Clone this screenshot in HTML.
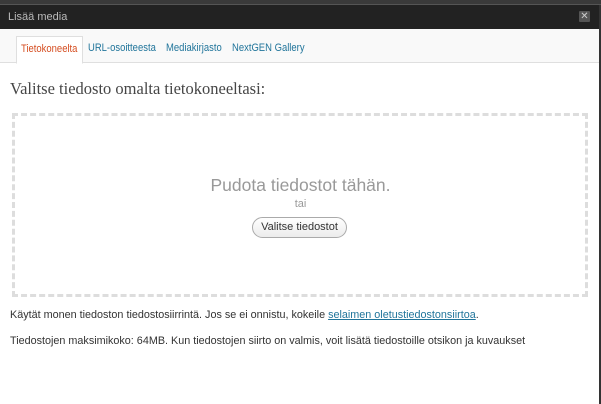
<!DOCTYPE html>
<html><head><meta charset="utf-8"><style>
*{margin:0;padding:0;box-sizing:border-box}
body{width:601px;height:404px;overflow:hidden;background:#fff;font-family:"Liberation Sans",sans-serif;position:relative}
.top{position:absolute;left:0;top:0;width:601px;height:5px;background:#3a3a3a;border-bottom:1px solid #555}
.bar{position:absolute;left:0;top:5px;width:601px;height:24px;background:#222;color:#bbb;font-size:11px;line-height:24px;padding-left:8px}
.x{position:absolute;left:579px;top:11px;width:11px;height:11px;background:#555;color:#ccc;font-size:10px;line-height:11px;text-align:center;border-radius:1px}
.tabs{position:absolute;left:0;top:29px;width:601px;height:34px;background:#f9f9f9;border-bottom:1px solid #dfdfdf}
.tab{position:absolute;top:7px;height:27px;font-size:11px;line-height:24px;color:#21759b;white-space:nowrap}
.tab span{display:inline-block;transform:scaleX(0.86);transform-origin:0 0}
.act{left:16px;width:67px;border:1px solid #dfdfdf;border-bottom:1px solid #fff;background:#fff;color:#d54e21;height:28px;padding-left:4px}
.rb{position:absolute;right:0;top:5px;width:2px;height:399px;background:#333}
h2{position:absolute;left:10px;top:79px;font-family:"Liberation Serif",serif;font-weight:normal;font-size:16.5px;color:#464646;white-space:nowrap}
.drop{position:absolute;left:12px;top:113px;width:576px;height:184px;border:3px dashed #ddd}
.p1{position:absolute;left:0;width:601px;text-align:center;top:175px;font-size:17.5px;color:#999}
.p2{position:absolute;left:0;width:601px;text-align:center;top:198px;font-size:11px;color:#999}
.btn{position:absolute;left:252px;top:217px;width:95px;height:21px;border:1px solid #aaa;border-radius:11px;background:linear-gradient(#fff,#ececec);font-size:11px;line-height:19px;text-align:center;color:#333}
.t{position:absolute;left:10px;font-size:10.8px;color:#333;white-space:nowrap}
a{color:#21759b;text-decoration:underline}
</style></head><body>
<div class="top"></div>
<div class="bar">Lisää media</div>
<div class="x">✕</div>
<div class="tabs">
<div class="tab act"><span>Tietokoneelta</span></div>
<div class="tab" style="left:88px"><span>URL-osoitteesta</span></div>
<div class="tab" style="left:166px"><span>Mediakirjasto</span></div>
<div class="tab" style="left:232px"><span>NextGEN Gallery</span></div>
</div>
<h2>Valitse tiedosto omalta tietokoneeltasi:</h2>
<div class="drop"></div>
<div class="p1">Pudota tiedostot tähän.</div>
<div class="p2">tai</div>
<div class="btn">Valitse tiedostot</div>
<div class="t" style="top:309px">Käytät monen tiedoston tiedostosiirrintä. Jos se ei onnistu, kokeile <a>selaimen oletustiedostonsiirtoa</a>.</div>
<div class="t" style="top:335px">Tiedostojen maksimikoko: 64MB. Kun tiedostojen siirto on valmis, voit lisätä tiedostoille otsikon ja kuvaukset</div>
<div class="rb"></div>
</body></html>
